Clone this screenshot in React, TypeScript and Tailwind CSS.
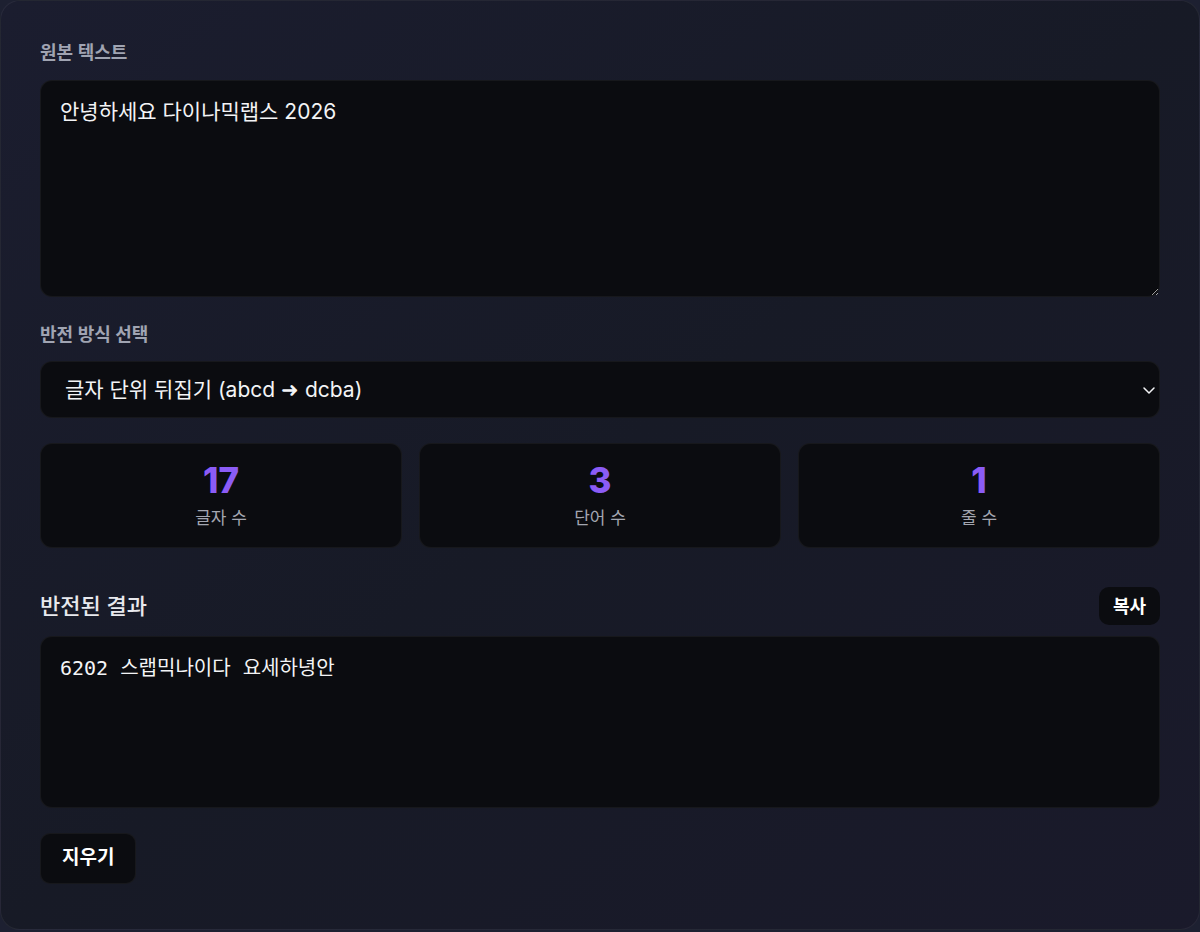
import React, { useState } from 'react';

const sans = 'font-["Inter","Noto_Sans_CJK_KR",sans-serif]';

function reverseText(text: string, mode: string) {
  if (mode === 'word') return text.split(' ').reverse().join(' ');
  if (mode === 'line') return text.split('\n').reverse().join('\n');
  return Array.from(text).reverse().join('');
}

export default function App() {
  const [text, setText] = useState('안녕하세요 다이나믹랩스 2026');
  const [mode, setMode] = useState('char');

  const result = reverseText(text, mode);
  const chars = Array.from(text).length;
  const words = text.trim() ? text.trim().split(/\s+/).length : 0;
  const lines = text ? text.split('\n').length : 0;

  const stats = [
    { value: chars, label: '글자 수' },
    { value: words, label: '단어 수' },
    { value: lines, label: '줄 수' },
  ];

  return (
    <div className={`min-h-screen bg-[#1d2031] ${sans}`}>
      <div className="h-[930px] w-full rounded-[20px] border border-white/[0.06] bg-gradient-to-br from-[#1b1d2f] via-[#171a26] to-[#1a1a2b] px-[39px] pt-[39px] flex flex-col">
        {/* Source */}
        <label className="text-[18px] leading-[26px] font-semibold text-[#a0a4b2] mb-[14px]">원본 텍스트</label>
        <textarea
          value={text}
          onChange={(e) => setText(e.target.value)}
          className="h-[217px] w-full rounded-xl border border-white/[0.05] bg-[#0b0c10] px-[19px] py-[17px] text-[21px] leading-7 text-[#f3f4f6] outline-none"
        />

        {/* Mode */}
        <label className="mt-[25px] mb-[13px] text-[18px] leading-[26px] font-semibold text-[#a0a4b2]">반전 방식 선택</label>
        <div className="relative">
          <select
            value={mode}
            onChange={(e) => setMode(e.target.value)}
            className="h-[57px] w-full appearance-none rounded-xl border border-white/[0.05] bg-[#0b0c10] pl-[24px] pr-10 text-[21px] text-[#f3f4f6] outline-none"
          >
            <option value="char">글자 단위 뒤집기 (abcd ➜ dcba)</option>
            <option value="word">단어 단위 뒤집기</option>
            <option value="line">줄 단위 뒤집기</option>
          </select>
          <svg className="pointer-events-none absolute right-[4px] top-1/2 -translate-y-1/2" width="14" height="14" viewBox="0 0 14 14" fill="none">
            <path d="M2 5l5 5 5-5" stroke="#f3f4f6" strokeWidth="1.5" strokeLinecap="round" strokeLinejoin="round" />
          </svg>
        </div>

        {/* Stats */}
        <div className="mt-[25px] grid grid-cols-3 gap-[17px]">
          {stats.map((s) => (
            <div key={s.label} className="h-[105px] rounded-xl border border-white/[0.05] bg-[#0b0c10] flex flex-col items-center justify-center">
              <div className="text-[35px] leading-[40px] font-extrabold text-[#8b5cf6]">{s.value}</div>
              <div className="mt-[6px] text-[17px] text-[#a3a6b0]">{s.label}</div>
            </div>
          ))}
        </div>

        {/* Result */}
        <div className="mt-[39px] flex items-center justify-between">
          <h2 className="text-[22px] font-medium text-[#e8e9ee]">반전된 결과</h2>
          <button className="h-[38px] rounded-[10px] bg-[#0b0c10] px-[14px] text-[18px] font-bold text-white">복사</button>
        </div>
        <div className='mt-[11px] h-[172px] rounded-xl border border-white/[0.05] bg-[#0b0c10] px-[19px] py-[19px] text-xl leading-6 whitespace-pre-wrap text-[#f3f4f6] font-["DejaVu_Sans_Mono","Noto_Sans_CJK_KR",monospace]'>
          {result}
        </div>

        <div className="mt-[25px]">
          <button className="h-[51px] rounded-[10px] border border-white/[0.05] bg-[#0b0c10] px-[21px] text-[19px] font-bold text-white">지우기</button>
        </div>
      </div>
    </div>
  );
}
